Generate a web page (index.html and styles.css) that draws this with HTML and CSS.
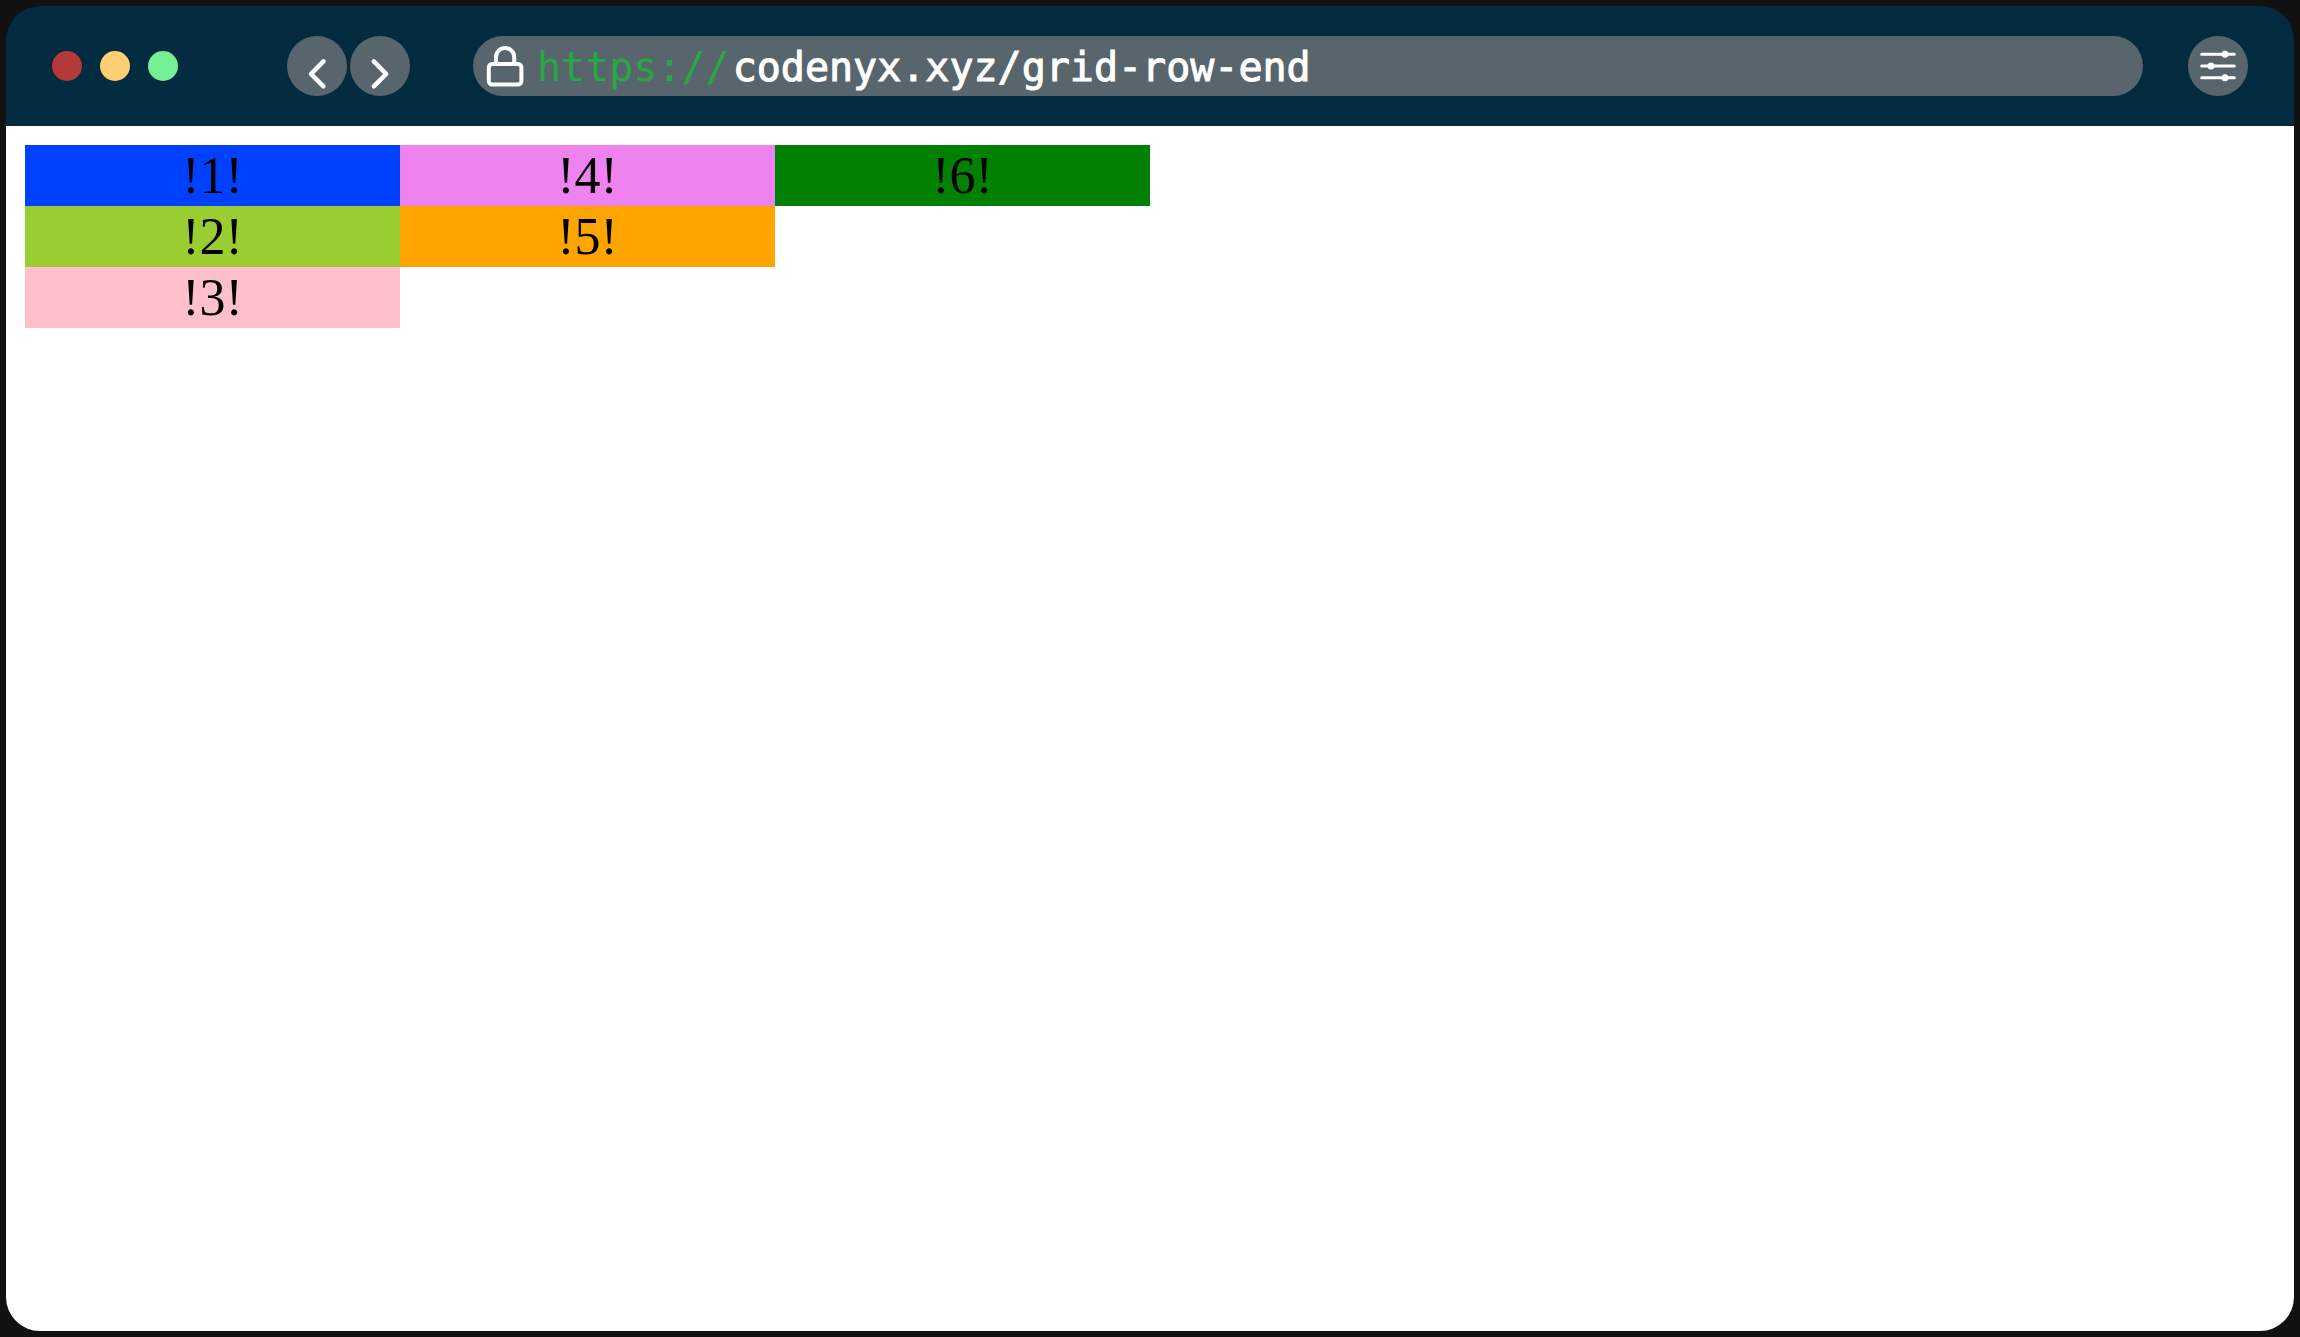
FILE: index.html
```html
<!DOCTYPE html>
<html lang="en">
<head>
<meta charset="utf-8">
<meta name="viewport" content="width=device-width, initial-scale=1">
<title>grid-row-end</title>
<link rel="stylesheet" href="styles.css">
</head>
<body>
<div class="browser">
  <header class="toolbar">
    <div class="lights">
      <span class="light light-close"></span>
      <span class="light light-minimise"></span>
      <span class="light light-zoom"></span>
    </div>
    <nav class="history">
      <button class="round" type="button" aria-label="Back">
        <svg class="icon" viewBox="0 0 60 60"><path d="M36.4 25.4 24 38l12.4 12.4" stroke-width="4.5"/></svg>
      </button>
      <button class="round" type="button" aria-label="Forward">
        <svg class="icon" viewBox="0 0 60 60"><path d="M23.8 25.4 36.2 38 23.8 50.4" stroke-width="4.5"/></svg>
      </button>
    </nav>
    <form class="address">
      <svg class="lock" viewBox="0 0 40 44" aria-hidden="true">
        <rect x="3.8" y="20" width="32.6" height="20.6" rx="3.5"/>
        <path d="M11 20V13a9.1 9.1 0 0 1 18.2 0v7"/>
      </svg>
      <label class="scheme" for="url">https://</label>
      <input class="url" id="url" type="text" value="codenyx.xyz/grid-row-end" spellcheck="false">
    </form>
    <button class="round" type="button" aria-label="Settings">
      <svg class="icon" viewBox="0 0 60 60">
        <path d="M13.7 18.3h32.6M13.7 30h32.6M13.7 41.7h32.6" stroke-width="3"/>
        <g class="knobs"><circle cx="37" cy="18.3" r="3.5"/><circle cx="23" cy="30" r="3.5"/><circle cx="37" cy="41.7" r="3.5"/></g>
      </svg>
    </button>
  </header>
  <main class="page">
    <div class="grid">
      <div class="cell blue">!1!</div>
      <div class="cell lime">!2!</div>
      <div class="cell pink">!3!</div>
      <div class="cell violet">!4!</div>
      <div class="cell orange">!5!</div>
      <div class="cell green">!6!</div>
    </div>
  </main>
</div>
</body>
</html>
```
FILE: styles.css
```css
* { box-sizing: border-box; }

body {
  margin: 0;
  padding: 6px;
  min-height: 100vh;
  display: flex;
  background: #111;
}

.browser {
  flex: 1;
  min-width: 0;
  display: flex;
  flex-direction: column;
}

.toolbar {
  display: flex;
  align-items: center;
  padding: 30px 46px;
  border-radius: 34px 34px 0 0;
  background: #022b40;
}

.lights { display: flex; gap: 18px; margin-right: 109px; }
.light { width: 30px; height: 30px; border-radius: 50%; }
.light-close { background: #b43a3a; }
.light-minimise { background: #fecf72; }
.light-zoom { background: #77ef95; }

.history { display: flex; gap: 3px; margin-right: 63px; }

.round {
  flex: none;
  width: 60px;
  height: 60px;
  padding: 0;
  border: 0;
  border-radius: 50%;
  background: #58656d;
}

.icon, .lock {
  display: block;
  fill: none;
  stroke: #fff;
  stroke-linecap: round;
  stroke-linejoin: round;
}
.icon { width: 60px; height: 60px; }
.knobs { fill: #fff; stroke: none; }

.address {
  flex: 1;
  min-width: 0;
  height: 60px;
  display: flex;
  align-items: center;
  margin-right: 45px;
  padding: 0 30px 0 12px;
  border-radius: 30px;
  background: #58656d;
  font: 40px/60px "DejaVu Sans Mono", monospace;
}
.lock { flex: none; width: 40px; height: 44px; margin-right: 12px; stroke-width: 4; }
.scheme { padding-top: 2px; color: #28a745; }
.url {
  flex: 1;
  min-width: 0;
  height: 60px;
  margin: 0 0 0 3px;
  padding: 2px 0 0;
  border: 0;
  outline: 0;
  background: none;
  color: #fff;
  font: inherit;
  -webkit-text-stroke: 1px #fff;
}

.page {
  flex: 1;
  padding: 19px;
  border-radius: 0 0 34px 34px;
  background: #fff;
}

.grid {
  display: grid;
  grid-auto-flow: column;
  grid-template-rows: repeat(3, auto);
  grid-template-columns: repeat(3, 1fr);
  width: 50%;
}
.cell {
  font: 52px/61px "Liberation Serif", serif;
  text-align: center;
  color: #000;
}
.blue { background: #0040ff; }
.lime { background: yellowgreen; }
.pink { background: pink; }
.violet { background: violet; }
.orange { background: orange; }
.green { grid-row: 1; grid-column: 3; background: green; }
```
